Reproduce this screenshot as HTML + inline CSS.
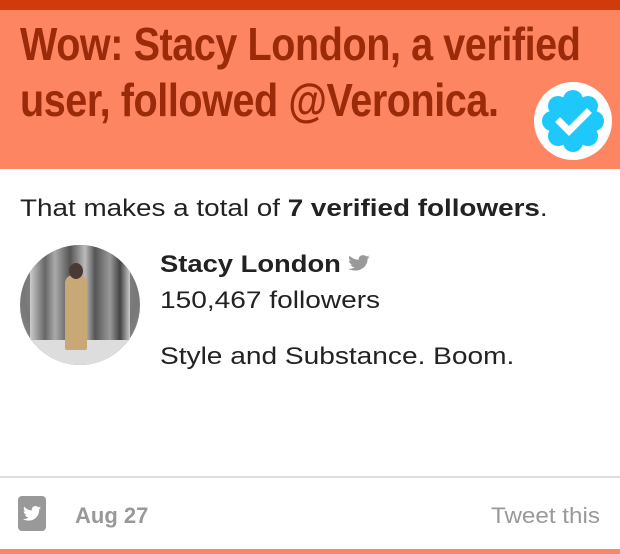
<!DOCTYPE html>
<html><head><meta charset="utf-8"><style>
html,body{margin:0;padding:0;width:620px;height:554px;overflow:hidden;background:#fff;font-family:"Liberation Sans",sans-serif}
.top{position:absolute;left:0;top:0;width:620px;height:10px;background:#d03a0c}
.hdr{position:absolute;left:0;top:10px;width:620px;height:159px;background:#fe8562}
.h{position:absolute;left:20px;top:16px;font-weight:bold;font-size:46px;line-height:56px;color:#9a2a0a;letter-spacing:-0.5px;white-space:nowrap;transform:scaleX(0.86);transform-origin:0 0}
.s{transform:scaleX(1.16);transform-origin:0 0;white-space:nowrap;position:absolute}
.t{left:20px;top:195px;font-size:24px;color:#222}
.av{position:absolute;left:20px;top:245px;width:120px;height:120px;border-radius:50%;background:radial-gradient(circle at 50% 40%,#bbb,#777 60%,#999);overflow:hidden}
.name{left:160px;top:251px;font-size:24px;font-weight:bold;color:#222;transform:scaleX(1.14)}
.fol{left:160px;top:287px;font-size:24px;color:#222;transform:scaleX(1.17)}
.bio{left:160px;top:343px;font-size:24px;color:#222;transform:scaleX(1.17)}
.line{position:absolute;left:0;top:476px;width:620px;height:2px;background:#ddd}
.ic{position:absolute;left:18px;top:496px;width:28px;height:35px;border-radius:4px;background:#999}
.date{position:absolute;left:75px;top:503px;font-size:22px;font-weight:bold;color:#999}
.tw{position:absolute;left:491px;top:503px;font-size:22px;color:#999;transform:scaleX(1.1);transform-origin:0 0}
.bot{position:absolute;left:0;top:549px;width:620px;height:5px;background:#fe8562}
</style></head><body>
<div class="top"></div><div class="hdr"></div>
<div class="h">Wow: Stacy London, a verified<br>user, followed @Veronica.</div>
<svg style="position:absolute;left:533px;top:81px" width="80" height="80" viewBox="0 0 80 80">
<circle cx="40" cy="40" r="39" fill="#fff"/>
<g fill="#1ec8fa">
<circle cx="40" cy="40" r="24"/>
<circle cx="40" cy="19" r="10"/><circle cx="40" cy="61" r="10"/><circle cx="19" cy="40" r="10"/><circle cx="61" cy="40" r="10"/>
<circle cx="25" cy="25" r="10"/><circle cx="55" cy="25" r="10"/><circle cx="25" cy="55" r="10"/><circle cx="55" cy="55" r="10"/>
</g>
<path d="M27 41 L36 50 L54 32" stroke="#fff" stroke-width="7" fill="none" stroke-linecap="square"/>
</svg>
<div class="s t">That makes a total of <b>7 verified followers</b>.</div>
<div class="av">
<div style="position:absolute;left:10px;top:0;width:100px;height:95px;background:linear-gradient(90deg,#ccc,#666 15%,#aaa 25%,#555 40%,#bbb 55%,#555 65%,#999 80%,#444 90%,#ccc)"></div>
<div style="position:absolute;left:0;top:95px;width:120px;height:25px;background:#ddd"></div>
<div style="position:absolute;left:45px;top:30px;width:22px;height:75px;background:#c9a878;border-radius:8px 8px 2px 2px"></div>
<div style="position:absolute;left:49px;top:18px;width:14px;height:16px;background:#4a3a35;border-radius:50%"></div>
</div>
<div class="s name">Stacy London <svg width="19" height="18" viewBox="0 0 24 20" style="vertical-align:0"><path fill="#999" d="M24 2.4c-.9.4-1.8.6-2.8.8 1-.6 1.8-1.6 2.2-2.7-1 .6-2 1-3.1 1.2C19.3.7 18 0 16.6 0c-2.7 0-4.9 2.2-4.9 4.9 0 .4 0 .8.1 1.1C7.7 5.8 4.1 3.9 1.7.9c-.4.7-.7 1.6-.7 2.5 0 1.7.9 3.2 2.2 4.1-.8 0-1.6-.2-2.2-.6v.1c0 2.4 1.7 4.4 3.9 4.8-.4.1-.8.2-1.3.2-.3 0-.6 0-.9-.1.6 2 2.4 3.4 4.6 3.4-1.7 1.3-3.8 2.1-6.1 2.1-.4 0-.8 0-1.2-.1 2.2 1.4 4.8 2.2 7.5 2.2 9.1 0 14-7.5 14-14v-.6c1-.7 1.8-1.6 2.5-2.5z"/></svg></div>
<div class="s fol">150,467 followers</div>
<div class="s bio">Style and Substance. Boom.</div>
<div class="line"></div>
<div class="ic"><svg width="28" height="35" viewBox="0 0 28 35"><path transform="translate(5,10) scale(0.75)" fill="#fff" d="M24 2.4c-.9.4-1.8.6-2.8.8 1-.6 1.8-1.6 2.2-2.7-1 .6-2 1-3.1 1.2C19.3.7 18 0 16.6 0c-2.7 0-4.9 2.2-4.9 4.9 0 .4 0 .8.1 1.1C7.7 5.8 4.1 3.9 1.7.9c-.4.7-.7 1.6-.7 2.5 0 1.7.9 3.2 2.2 4.1-.8 0-1.6-.2-2.2-.6v.1c0 2.4 1.7 4.4 3.9 4.8-.4.1-.8.2-1.3.2-.3 0-.6 0-.9-.1.6 2 2.4 3.4 4.6 3.4-1.7 1.3-3.8 2.1-6.1 2.1-.4 0-.8 0-1.2-.1 2.2 1.4 4.8 2.2 7.5 2.2 9.1 0 14-7.5 14-14v-.6c1-.7 1.8-1.6 2.5-2.5z"/></svg></div>
<div class="date">Aug 27</div>
<div class="tw">Tweet this</div>
<div class="bot"></div>
</body></html>
